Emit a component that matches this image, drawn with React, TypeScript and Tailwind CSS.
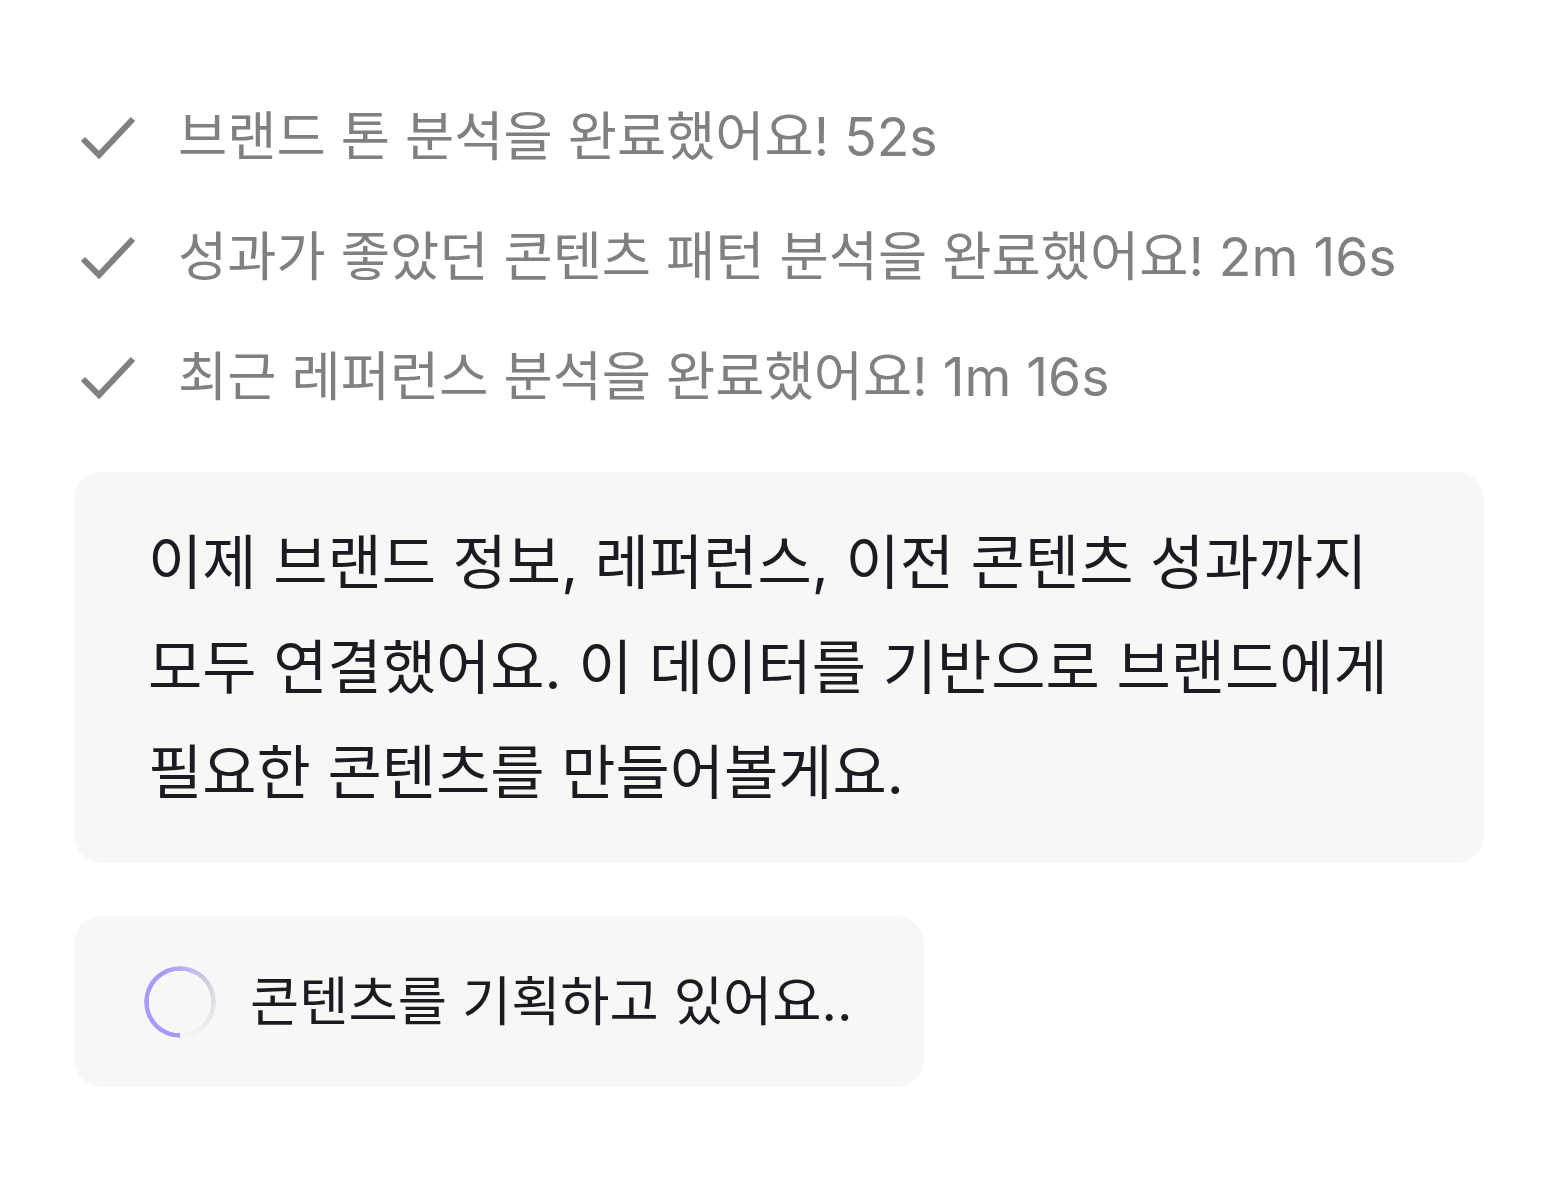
import { FC } from 'react';

const steps = [
  '브랜드 톤 분석을 완료했어요! 52s',
  '성과가 좋았던 콘텐츠 패턴 분석을 완료했어요! 2m 16s',
  '최근 레퍼런스 분석을 완료했어요! 1m 16s',
];

const CheckIcon: FC = () => (
  <svg width="56" height="44" viewBox="0 0 56 44" fill="none" className="shrink-0">
    <path d="M3 24 19 40 53 4" stroke="#808080" strokeWidth="6" strokeLinejoin="miter" />
  </svg>
);

const Spinner: FC = () => (
  // conic ring, purple fading to grey
  <div className="h-[72px] w-[72px] shrink-0 rounded-full bg-[conic-gradient(from_180deg,#a79bff_0%,#a79bff_42%,#d6d5dc_68%,#ecebef_86%,rgba(248,247,246,0)_100%)] [mask-image:radial-gradient(circle,transparent_31px,#000_31.5px)]" />
);

const App: FC = () => {
  return (
    <div className="min-h-[1200px] w-[1560px] bg-white px-[74px] pt-[77px] font-['Inter','Noto_Sans_CJK_KR',sans-serif]">
      <div className="flex flex-col">
        {steps.map((s) => (
          <div key={s} className="flex h-[120px] items-center gap-[42px] pl-[6px]">
            <CheckIcon />
            <span className="text-[53.5px] leading-none whitespace-nowrap text-[#808080]">{s}</span>
          </div>
        ))}
      </div>

      <div className="mt-[35px] w-[1410px] rounded-[28px] bg-[#f8f7f6] py-[38px] pl-[74px] pr-[50px]">
        <p className="text-[59px] leading-[105px] break-keep text-[#1d1a22]">
          이제 브랜드 정보, 레퍼런스, 이전 콘텐츠 성과까지 모두 연결했어요. 이 데이터를 기반으로 브랜드에게 필요한 콘텐츠를 만들어볼게요.
        </p>
      </div>

      <div className="mt-[53px] flex h-[171px] w-[850px] items-center gap-[34px] rounded-[28px] bg-[#f8f7f6] pl-[70px]">
        <Spinner />
        <span className="text-[53.5px] leading-none whitespace-nowrap text-[#1d1a22]">콘텐츠를 기획하고 있어요..</span>
      </div>
    </div>
  );
};

export default App;
